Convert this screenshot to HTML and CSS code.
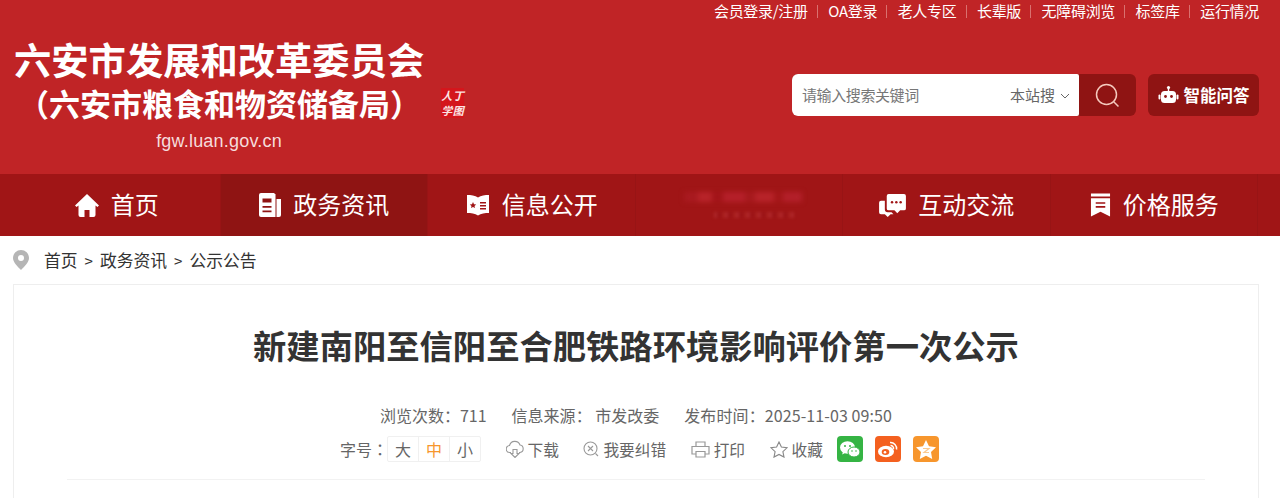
FILE: index.html
```html
<!DOCTYPE html>
<html lang="zh-CN">
<head>
  <meta charset="UTF-8" />
  <title>新建南阳至信阳至合肥铁路环境影响评价第一次公示</title>
  <link rel="stylesheet" href="styles.css">
</head>
<body>
<header class="head">
  <div class="toplinks">
    <a>会员登录/注册</a><a>OA登录</a><a>老人专区</a><a>长辈版</a><a>无障碍浏览</a><a>标签库</a><a>运行情况</a>
  </div>
  <div class="head-main">
    <div class="logo">
      <div class="logo-name">六安市发展和改革委员会</div>
      <div class="logo-sub">（六安市粮食和物资储备局）</div>
      <div class="logo-url">fgw.luan.gov.cn</div>
    </div>
    <div class="seal"><span>人</span><span>丁</span><span>学</span><span>图</span></div>
    <div class="tools">
      <div class="search">
        <span class="search-hint">请输入搜索关键词</span>
        <span class="search-scope">本站搜
          <svg width="10" height="6" viewBox="0 0 10 6"><path d="M1 1l4 4 4-4" fill="none" stroke="#666" stroke-width="1"/></svg>
        </span>
        <span class="search-btn">
          <svg width="25" height="25" viewBox="0 0 25 25"><circle cx="11.500" cy="11.500" r="10" fill="none" stroke="#f5c9bd" stroke-width="1.500"/><path d="M18.500 18.500l5 5" stroke="#f5c9bd" stroke-width="1.500"/></svg>
        </span>
      </div>
      <div class="ask">
        <svg width="21" height="20" viewBox="0 0 20 20"><circle cx="10" cy="2.500" r="1.600" fill="#fff"/><rect x="9.300" y="3" width="1.400" height="4" fill="#fff"/><rect x="2.500" y="6" width="15" height="12" rx="3.500" fill="#fff"/><rect x="0" y="9.500" width="2" height="5" rx="1" fill="#fff"/><rect x="18" y="9.500" width="2" height="5" rx="1" fill="#fff"/><circle cx="7" cy="11.500" r="1.400" fill="#8f1413"/><circle cx="13" cy="11.500" r="1.400" fill="#8f1413"/></svg>
        智能问答
      </div>
    </div>
  </div>
</header>

<nav class="nav">
  <a class="nav-item">
    <svg width="24" height="24" viewBox="0 0 24 24"><path d="M12 1L0 12.500l1.600 1.600L3.500 12.400V22a2 2 0 0 0 2 2h4v-7h5v7h4a2 2 0 0 0 2-2v-9.600l1.900 1.700L24 12.500z" fill="#fff"/></svg>
    首页
  </a>
  <a class="nav-item on">
    <svg width="22" height="24" viewBox="0 0 22 24"><path d="M2 0h13l1.500 1.500V24H2a2 2 0 0 1-2-2V2a2 2 0 0 1 2-2z" fill="#fff"/><path d="M17.500 6H22v16a2 2 0 0 1-2 2h-2.500z" fill="#fff"/><path d="M3.500 5.500h9v4h-9zM3.500 13h9v1.800h-9zM3.500 17.500h9v1.800h-9z" fill="#8f1413"/></svg>
    政务资讯
  </a>
  <a class="nav-item">
    <svg width="24" height="24" viewBox="0 0 24 24"><path d="M1 2c4 0 8 .5 11 2.500C15 2.500 19 2 23 2v18c-4 0-8 .5-11 2.500C9 20.500 5 20 1 20z" fill="#fff"/><path d="M7 9l1 2.200 2.200.2-1.700 1.500.5 2.200L7 13.900l-2 1.200.5-2.200-1.700-1.500 2.200-.2z" fill="#a01516"/><path d="M14 9h6v1.500h-6zM14 12h6v1.500h-6zM14 15h6v1.500h-6z" fill="#a01516"/></svg>
    信息公开
  </a>
  <a class="nav-item">
    <span class="blurred"><i class="blur-top"></i><i class="blur-low"></i></span>
  </a>
  <a class="nav-item">
    <svg width="27" height="23" viewBox="0 0 28 24"><path d="M8 2a2 2 0 0 1 2-2h16a2 2 0 0 1 2 2v13a2 2 0 0 1-2 2h-4l-3 3-3-3h-6a2 2 0 0 1-2-2z" fill="#fff"/><path d="M6 7v9a3 3 0 0 0 3 3h4l2 2h-3l-3 3-3-3H2a2 2 0 0 1-2-2V9a2 2 0 0 1 2-2z" fill="#fff"/><circle cx="13.500" cy="8.500" r="1.300" fill="#a01516"/><circle cx="18" cy="8.500" r="1.300" fill="#a01516"/><circle cx="22.500" cy="8.500" r="1.300" fill="#a01516"/></svg>
    互动交流
  </a>
  <a class="nav-item">
    <svg width="21" height="24" viewBox="0 0 22 24"><path d="M1 0h20v3H1zM1 5h20v19l-10-5-10 5z" fill="#fff"/><path d="M6 9h10v1.800H6zM6 13h10v1.800H6z" fill="#a01516"/></svg>
    价格服务
  </a>
</nav>

<div class="crumb">
  <svg width="16" height="20" viewBox="0 0 16 20"><path fill-rule="evenodd" d="M8 0a8 8 0 0 1 8 8c0 4.500-5 9-8 12C5 17 0 12.500 0 8a8 8 0 0 1 8-8zm0 5a3 3 0 1 0 0 6 3 3 0 0 0 0-6z" fill="#b5b5b5"/></svg>
  <span class="crumb-path"><a>首页</a><b>&gt;</b><a>政务资讯</a><b>&gt;</b><a>公示公告</a></span>
</div>

<main class="article">
  <h1 class="title">新建南阳至信阳至合肥铁路环境影响评价第一次公示</h1>
  <div class="meta">
    <span>浏览次数<span class="colon">：</span>711</span>
    <span>信息来源<span class="colon">：</span> 市发改委</span>
    <span class="meta-time">发布时间<span class="colon">：</span>2025-11-03 09:50</span>
  </div>
  <div class="actions">
    <div class="fontsize">
      字号<span class="colon">：</span>
      <span class="sizes"><i>大</i><i class="cur">中</i><i>小</i></span>
    </div>
    <a class="act">
      <svg width="18" height="18" viewBox="0 0 18 18"><path d="M5 12.500H4a3.500 3.500 0 0 1-.5-7A5.500 5.500 0 0 1 14 5a3.800 3.800 0 0 1 0 7.500h-1M7 9.500v4H5l4 4 4-4h-2v-4z" fill="none" stroke="#999" stroke-width="1.100"/></svg>
      下载
    </a>
    <a class="act">
      <svg width="16" height="16" viewBox="0 0 16 16"><circle cx="7.500" cy="7.500" r="6.500" fill="none" stroke="#999" stroke-width="1.100"/><path d="M5 5l5 5M10 5l-5 5M12.500 12.500L15 15" stroke="#999" stroke-width="1.100"/></svg>
      我要纠错
    </a>
    <a class="act">
      <svg width="19" height="17" viewBox="0 0 19 17"><path d="M5 5V1h9v4M5 13H1V5.500h17V13h-4M5 10.500h9V16H5z" fill="none" stroke="#999" stroke-width="1.200"/></svg>
      打印
    </a>
    <a class="act">
      <svg width="18" height="17" viewBox="0 0 18 17"><path d="M9 1l2.400 5.100 5.600.7-4.100 3.800 1.100 5.500L9 13.400l-5 2.700 1.100-5.500L1 6.800l5.600-.7z" fill="none" stroke="#888" stroke-width="1.100"/></svg>
      收藏
    </a>
    <span class="share share-wx">
      <svg width="20" height="17" viewBox="0 0 20 17"><ellipse cx="7.500" cy="6.500" rx="7.500" ry="6.200" fill="#fff"/><path d="M3 10.500l-.8 3 3.300-1.800z" fill="#fff"/><ellipse cx="14" cy="11" rx="6" ry="5" fill="#fff" stroke="#35b444"/><circle cx="5" cy="5" r="1" fill="#35b444"/><circle cx="10" cy="5" r="1" fill="#35b444"/><circle cx="12" cy="10" r=".8" fill="#35b444"/><circle cx="16" cy="10" r=".8" fill="#35b444"/></svg>
    </span>
    <span class="share share-wb">
      <svg width="20" height="18" viewBox="0 0 20 18"><ellipse cx="8" cy="11.500" rx="8" ry="5.800" fill="#fff"/><ellipse cx="7.500" cy="12" rx="3.800" ry="3" fill="#f4601f"/><circle cx="7" cy="12.200" r="1.300" fill="#fff"/><path d="M12 2.500a6 6 0 0 1 6.500 7M12.500 5.500a3 3 0 0 1 3 3.500" fill="none" stroke="#fff" stroke-width="1.500"/></svg>
    </span>
    <span class="share share-qz">
      <svg width="20" height="19" viewBox="0 0 20 19"><path d="M10 0l3 6.200 7 1-5 4.800 1.200 7L10 15.700 3.800 19 5 12 0 7.200l7-1z" fill="#fff"/><path d="M7 8.500h6l-5 4h5" fill="none" stroke="#fbc98f" stroke-width="1.200"/></svg>
    </span>
  </div>
  <div class="rule"></div>
</main>
</body>
</html>
```

FILE: styles.css
```css
html,body{height:498px;overflow:hidden}
body{
  margin:0;
  background:#fff;
  color:#333;
  font-family:"Noto Sans CJK SC","Liberation Sans",sans-serif;
}

.head{height:174px;background:#c02426;color:#fff}
.toplinks{display:flex;justify-content:flex-end;padding:1px 21px 0 0;font-size:15px;line-height:20px;letter-spacing:-.3px}
.toplinks a{padding:0 10.250px;position:relative}
.toplinks a+a:before{content:"";position:absolute;left:-1px;top:4px;height:13px;border-left:1px solid #d9716f}
.toplinks a:last-child{padding-right:0}

.head-main{display:flex;align-items:flex-start;padding:0 21px 0 14px}
.logo{width:410px;text-align:center}
.logo-name{margin-top:16px;font-size:37.300px;line-height:44px;font-weight:700;white-space:nowrap;text-align:left}
.logo-sub{margin-top:1px;font-size:31px;line-height:42px;font-weight:700;white-space:nowrap;text-align:left;margin-left:4px}
.logo-url{margin-top:5px;font:18px/24px "Liberation Sans",sans-serif;letter-spacing:.2px;color:#f6dcdc}
.seal{
  margin:67px 0 0 17px;
  width:23px;height:30px;
  background:#d4161c;
  color:#fbe4e4;
  display:grid;grid-template-columns:1fr 1fr;
  font-size:11px;line-height:15px;font-weight:700;font-style:italic;text-align:center;
}
.tools{margin-left:auto;margin-top:53px;display:flex;gap:12px}
.search{display:flex;width:344px;height:42px;border-radius:6px;overflow:hidden;background:#8f1413}
.search-hint{width:208px;padding-left:10px;background:#fff;color:#777;font-size:15px;letter-spacing:-.4px;line-height:42px}
.search-scope{width:69px;background:#fff;color:#666;font-size:15px;line-height:42px;white-space:nowrap;border-radius:0 2px 2px 0}
.search-scope svg{margin-left:2px;vertical-align:2px}
.search-btn{flex:1;display:flex;align-items:center;justify-content:center}
.ask{
  width:111px;height:42px;
  display:flex;align-items:center;justify-content:center;gap:5px;
  background:#8f1413;
  border-radius:6px;
  font-size:16.500px;font-weight:700;
}

.nav{height:62px;background:#a01516;display:flex;padding-left:13px;color:#fff}
.nav-item{
  width:207.500px;
  box-sizing:border-box;
  padding-bottom:3px;
  display:flex;align-items:center;justify-content:center;gap:12px;
  font-size:24px;
  box-shadow:inset -1px 0 0 #981415;
}
.nav-item svg{margin-top:3px}
.nav-item.on{background:#8f1413}
.blurred{display:flex;flex-direction:column;align-items:flex-end;gap:10px;width:125px;margin-top:3px}
.blurred i{display:block}
.blur-top{
  width:118px;height:10px;
  filter:blur(2.500px);
  background:linear-gradient(90deg,#a91a20 0 12%,#b8242a 12% 24%,#a31519 24% 33%,#b5202a 33% 52%,#a71a1e 52% 60%,#b8242a 60% 76%,#a51719 76% 84%,#b3202a 84%);
}
.blur-low{
  width:80px;height:6px;margin-right:8px;
  filter:blur(1.500px);
  background:repeating-linear-gradient(90deg,#ad2629 0 3px,#9c1417 3px 8px,#a9201f 8px 11px);
}

.crumb{height:48px;display:flex;align-items:center;gap:15px;padding-left:13px}
.crumb-path{display:flex;align-items:center;gap:7px;font-size:16.800px}
.crumb-path b{font-weight:400;font-size:15px}

.article{margin:0 21px 0 13px;height:214px;border:1px solid #eee;border-bottom:0}
.title{margin:36px 0 0;font-size:33.300px;line-height:48px;font-weight:700;text-align:center;color:#333}
.meta{display:flex;justify-content:center;gap:25px;margin-top:34px;font-size:16px;line-height:24px;color:#666}
.meta-time{letter-spacing:.1px}
.colon{font-family:"Noto Sans CJK TC",sans-serif}
.actions{display:flex;align-items:center;height:28px;margin-top:8px;padding-left:326px;font-size:16px;color:#666}
.fontsize{display:flex;align-items:center;white-space:nowrap}
.sizes{display:flex;border:1px solid #f0f0f0;border-radius:2px;margin-left:-1px}
.sizes i{width:30px;height:24px;line-height:24px;text-align:center;font-style:normal;border-left:1px solid #f0f0f0}
.sizes i:first-child{border-left:0}
.sizes .cur{color:#f7962d}
.act{display:flex;align-items:center;gap:4px;white-space:nowrap;margin-left:24.500px;font-size:15.700px}
.share{width:26px;height:26px;border-radius:4px;display:flex;align-items:center;justify-content:center}
.share-wx{margin-left:14.500px;background:#35b444}
.share-wb{margin-left:12px;background:#f4601f}
.share-qz{margin-left:12px;background:#f7962d}
.rule{margin:16px 53px 0;border-top:1px solid #f2f2f2}
```
